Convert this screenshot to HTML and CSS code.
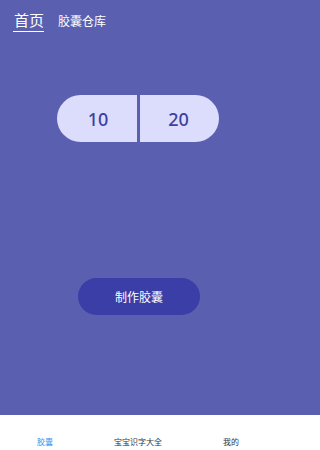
FILE: index.html
```html
<!DOCTYPE html>
<html lang="zh">
<head>
<meta charset="utf-8">
<link rel="stylesheet" href="styles.css">
</head>
<body>
<div class="app">
  <main class="main">
    <header class="topbar">
      <span class="toptab active">首页</span>
      <span class="toptab">胶囊仓库</span>
    </header>
    <section class="capsule">
      <div class="half left">10</div>
      <div class="half right">20</div>
    </section>
    <button class="make">制作胶囊</button>
  </main>
  <nav class="tabbar">
    <span class="tab current">胶囊</span>
    <span class="tab">宝宝识字大全</span>
    <span class="tab">我的</span>
  </nav>
</div>
</body>
</html>
```
FILE: styles.css
```css
html {
  background: linear-gradient(to bottom, #5a5fb0 0, #5a5fb0 415px, #ffffff 415px);
  background-repeat: no-repeat;
  min-height: 100%;
}
html, body {
  margin: 0;
  padding: 0;
  overflow: hidden;
  font-family: "Noto Sans CJK SC", "Noto Sans", sans-serif;
}
.app {
  display: flex;
  flex-direction: column;
  width: 270px;
  height: 450px;
  overflow: hidden;
}
.main {
  height: 415px;
  flex: none;
  background: #5a5fb0;
  display: flex;
  flex-direction: column;
  align-items: center;
}
.topbar {
  align-self: stretch;
  display: flex;
  align-items: flex-end;
  gap: 14px;
  padding: 9px 0 0 13px;
  height: 22px;
}
.toptab {
  color: #ffffff;
  font-size: 12px;
  line-height: 18px;
  padding-bottom: 1px;
}
.toptab.active {
  font-size: 15px;
  line-height: 20px;
  border-bottom: 1.5px solid #ffffff;
  padding: 0 0 1px 1px;
  margin-bottom: -0.5px;
}
.capsule {
  display: flex;
  gap: 3px;
  margin-top: 64px;
  margin-left: 6px;
}
.half {
  height: 47px;
  background: #dcdcfc;
  color: #3d419b;
  font-family: "Noto Sans", sans-serif;
  font-size: 18px;
  font-weight: 500;
  display: flex;
  align-items: center;
  justify-content: center;
}
.half.left {
  border-radius: 24px 0 0 24px;
  padding-left: 2px;
  width: 78px;
}
.half.right {
  border-radius: 0 24px 24px 0;
  padding-right: 2px;
  width: 77px;
}
.make {
  margin-top: 136px;
  margin-left: 8px;
  width: 122px;
  height: 37px;
  border: none;
  border-radius: 19px;
  background: #3a3ea6;
  color: #ffffff;
  font-family: "Noto Sans CJK SC", sans-serif;
  font-size: 12px;
  padding: 0;
}
.tabbar {
  flex: 1;
  display: grid;
  grid-template-columns: 93px 93px 93px;
  margin-left: -1.5px;
  align-items: end;
  padding-bottom: 2px;
  background: #ffffff;
}
.tab {
  text-align: center;
  font-size: 8px;
  line-height: 12px;
  color: #333333;
}
.tab.current {
  color: #3c8fe6;
}
```
